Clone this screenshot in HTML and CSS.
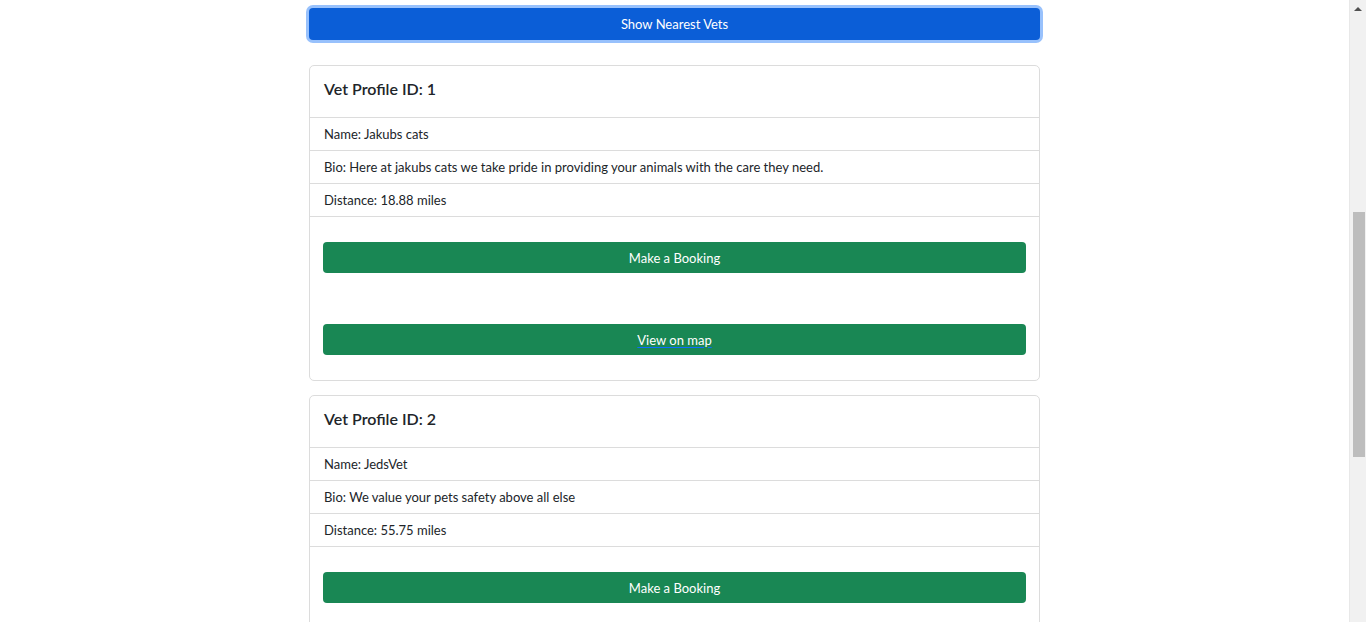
FILE: index.html
```html
<!DOCTYPE html>
<html lang="en">
<head>
<meta charset="utf-8">
<title>Nearest Vets</title>
<link rel="stylesheet" href="styles.css">
</head>
<body>
<div class="page">
  <main class="main">
    <div class="container">
      <button class="btn btn-primary">Show Nearest Vets</button>

      <div class="card">
        <div class="card-header">Vet Profile ID: 1</div>
        <ul class="list">
          <li class="list-item">Name: Jakubs cats</li>
          <li class="list-item">Bio: Here at jakubs cats we take pride in providing your animals with the care they need.</li>
          <li class="list-item">Distance: 18.88 miles</li>
        </ul>
        <div class="card-body">
          <button class="btn btn-success">Make a Booking</button>
          <button class="btn btn-success"><span class="link">View on map</span></button>
        </div>
      </div>

      <div class="card">
        <div class="card-header">Vet Profile ID: 2</div>
        <ul class="list">
          <li class="list-item">Name: JedsVet</li>
          <li class="list-item">Bio: We value your pets safety above all else</li>
          <li class="list-item">Distance: 55.75 miles</li>
        </ul>
        <div class="card-body">
          <button class="btn btn-success">Make a Booking</button>
          <button class="btn btn-success"><span class="link">View on map</span></button>
        </div>
      </div>
    </div>
  </main>
  <aside class="scrollbar">
    <div class="arrow-up"></div>
    <div class="thumb"></div>
  </aside>
</div>
</body>
</html>
```

FILE: styles.css
```css
html, body {
  margin: 0;
  padding: 0;
  height: 622px;
  overflow: hidden;
  background: #fff;
}
body {
  font-family: "Lato", "Noto Sans", "Liberation Sans", sans-serif;
  color: #212529;
  font-size: 13px;
}
.page {
  display: flex;
  height: 622px;
}
.main {
  flex: 1;
  overflow: hidden;
  padding-top: 8px;
}
.container {
  width: 731px;
  margin: 0 auto;
  display: flex;
  flex-direction: column;
}
.btn {
  display: flex;
  align-items: center;
  justify-content: center;
  width: 100%;
  border: none;
  border-radius: 4px;
  font-family: inherit;
  font-size: 13px;
  color: #fff;
  padding: 0;
  height: 31px;
}
.btn-primary {
  background: #0b5ed7;
  height: 32px;
  box-shadow: 0 0 0 3px #98c1fc;
  margin-bottom: 25px;
}
.btn-success {
  background: #198754;
}
.link {
  text-decoration: underline;
  text-decoration-color: #0d6efd;
  text-underline-offset: 2px;
}
.card {
  border: 1px solid #dcdcdc;
  border-radius: 5px;
  margin-bottom: 14px;
}
.card-header {
  height: 45px;
  display: flex;
  align-items: center;
  padding: 0 14px 6px;
  font-size: 16px;
  font-weight: 600;
  border-bottom: 1px solid #dcdcdc;
}
.list {
  list-style: none;
  margin: 0;
  padding: 0;
}
.list-item {
  height: 32px;
  display: flex;
  align-items: center;
  padding: 0 14px;
  border-bottom: 1px solid #dcdcdc;
}
.card-body {
  padding: 25px 13px 25px;
  display: flex;
  flex-direction: column;
  gap: 51px;
}
.scrollbar {
  width: 17px;
  height: 622px;
  background: #f1f1f1;
  border-left: 1px solid #e8e8e8;
  box-sizing: border-box;
  display: flex;
  flex-direction: column;
  align-items: center;
}
.arrow-up {
  margin-top: 7px;
  width: 0;
  height: 0;
  border-left: 4px solid transparent;
  border-right: 4px solid transparent;
  border-bottom: 4px solid #505050;
}
.thumb {
  margin-top: 201px;
  width: 12px;
  height: 245px;
  background: #bdbdbd;
  margin-left: 1px;
}
```
